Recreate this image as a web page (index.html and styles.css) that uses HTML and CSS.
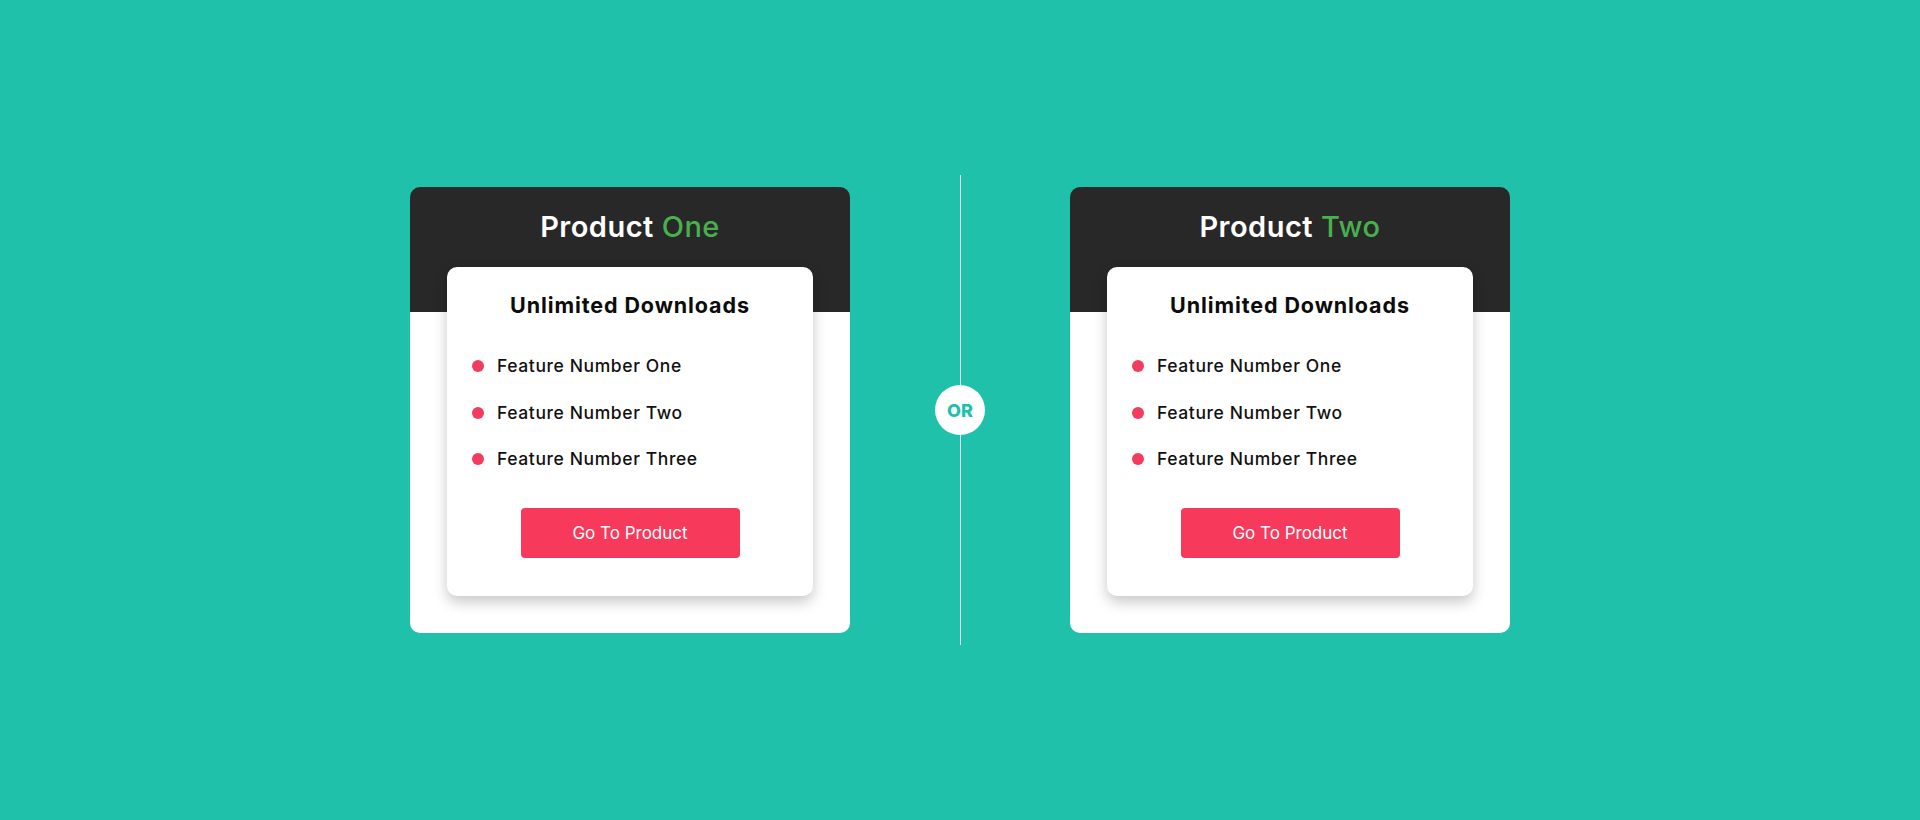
FILE: index.html
```html
<!DOCTYPE html>
<html lang="en">
<head>
<meta charset="utf-8">
<title>Products</title>
<link rel="stylesheet" href="styles.css">
</head>
<body>
<main class="compare">
  <section class="card">
    <h2 class="card-title">Product <span class="accent">One</span></h2>
    <div class="panel">
      <h3 class="panel-title">Unlimited Downloads</h3>
      <ul class="features">
        <li class="feature"><span class="dot"></span>Feature Number One</li>
        <li class="feature"><span class="dot"></span>Feature Number Two</li>
        <li class="feature"><span class="dot"></span>Feature Number Three</li>
      </ul>
      <a class="btn" href="#">Go To Product</a>
    </div>
  </section>
  <div class="divider">
    <span class="line"></span>
    <span class="or">OR</span>
    <span class="line"></span>
  </div>
  <section class="card">
    <h2 class="card-title">Product <span class="accent">Two</span></h2>
    <div class="panel">
      <h3 class="panel-title">Unlimited Downloads</h3>
      <ul class="features">
        <li class="feature"><span class="dot"></span>Feature Number One</li>
        <li class="feature"><span class="dot"></span>Feature Number Two</li>
        <li class="feature"><span class="dot"></span>Feature Number Three</li>
      </ul>
      <a class="btn" href="#">Go To Product</a>
    </div>
  </section>
</main>
</body>
</html>
```
FILE: styles.css
```css
* { box-sizing: border-box; }
html, body { margin: 0; padding: 0; }
body {
  background: #1fc1aa;
  font-family: Inter, "Noto Sans", Roboto, sans-serif;
  height: 820px;
  display: flex;
  align-items: center;
  justify-content: center;
}
.compare {
  display: flex;
  align-items: center;
}
.card {
  width: 440px;
  height: 446px;
  border-radius: 10px;
  background: linear-gradient(#282828 0, #282828 125px, #ffffff 125px);
  padding-top: 22px;
}
.card-title {
  margin: 0;
  text-align: center;
  color: #ffffff;
  font-size: 29px;
  line-height: 36px;
  font-weight: 600;
  letter-spacing: 0.5px;
}
.accent { color: #48b04c; font-weight: 500; }
.panel {
  width: 366px;
  margin: 22px auto 0;
  background: #ffffff;
  border-radius: 10px;
  box-shadow: 0 6px 14px rgba(0, 0, 0, 0.22);
  padding: 24px 0 38px;
  display: flex;
  flex-direction: column;
  align-items: center;
}
.panel-title {
  margin: 0;
  font-size: 21.5px;
  line-height: 28px;
  font-weight: 700;
  color: #0c0c0c;
  letter-spacing: 0.9px;
}
.features {
  list-style: none;
  margin: 34px 0 0;
  padding: 0 0 0 25px;
  align-self: stretch;
  display: flex;
  flex-direction: column;
  gap: 20.5px;
}
.feature {
  display: flex;
  align-items: center;
  gap: 13px;
  font-size: 17.5px;
  line-height: 26px;
  font-weight: 500;
  color: #111111;
  letter-spacing: 0.6px;
}
.dot {
  width: 12px;
  height: 12px;
  border-radius: 50%;
  background: #f23b5d;
  flex: none;
}
.btn {
  margin-top: 36px;
  width: 219px;
  height: 50px;
  border-radius: 4px;
  background: #f7395b;
  color: #ffffff;
  text-decoration: none;
  font-size: 17px;
  font-weight: 400;
  display: flex;
  align-items: center;
  justify-content: center;
}
.divider {
  width: 220px;
  height: 470px;
  display: flex;
  flex-direction: column;
  align-items: center;
}
.line {
  flex: 1;
  width: 1px;
  background: rgba(255, 255, 255, 0.85);
}
.or {
  width: 50px;
  height: 50px;
  border-radius: 50%;
  background: #ffffff;
  color: #1fc1aa;
  font-size: 18px;
  font-weight: 800;
  display: flex;
  align-items: center;
  justify-content: center;
  flex: none;
}
```
